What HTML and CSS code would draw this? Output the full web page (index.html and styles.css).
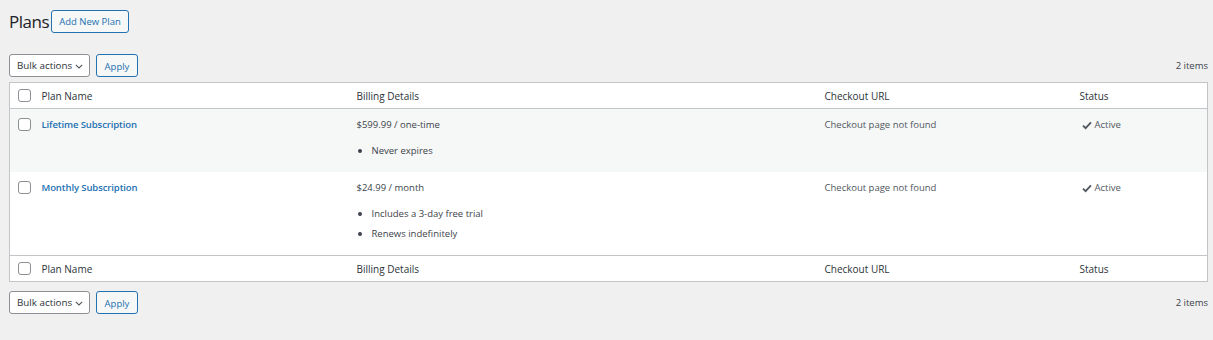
FILE: index.html
```html
<!DOCTYPE html>
<html lang="en">
<head>
<meta charset="utf-8">
<title>Plans</title>
<link rel="stylesheet" href="styles.css">
</head>
<body>
<div class="wrap">
  <div class="page-head">
    <h1 class="page-title">Plans</h1>
    <a class="btn btn-outline add-new" href="#">Add New Plan</a>
  </div>

  <div class="tablenav top">
    <div class="actions">
      <div class="select">Bulk actions
        <svg class="chev" width="8" height="5" viewBox="0 0 8 5"><path d="M0.8 0.8l3.2 3.2L7.2 0.8" fill="none" stroke="#50575e" stroke-width="1.1"/></svg>
      </div>
      <button class="btn btn-outline apply">Apply</button>
    </div>
    <div class="count">2 items</div>
  </div>

  <table class="list">
    <colgroup>
      <col class="c-check"><col class="c-name"><col class="c-bill"><col class="c-url"><col>
    </colgroup>
    <thead>
      <tr>
        <th class="check"><span class="cb"></span></th>
        <th>Plan Name</th>
        <th>Billing Details</th>
        <th>Checkout URL</th>
        <th>Status</th>
      </tr>
    </thead>
    <tbody>
      <tr class="alt">
        <td class="check"><span class="cb"></span></td>
        <td><a class="title" href="#">Lifetime Subscription</a></td>
        <td>
          <div class="price">$599.99 / one-time</div>
          <ul class="feat"><li>Never expires</li></ul>
        </td>
        <td>Checkout page not found</td>
        <td><span class="status"><svg width="10" height="9" viewBox="0 0 10 9"><path d="M1 4.6l2.6 2.6L9 1.3" fill="none" stroke="#50575e" stroke-width="1.8"/></svg>Active</span></td>
      </tr>
      <tr>
        <td class="check"><span class="cb"></span></td>
        <td><a class="title" href="#">Monthly Subscription</a></td>
        <td>
          <div class="price">$24.99 / month</div>
          <ul class="feat"><li>Includes a 3-day free trial</li><li>Renews indefinitely</li></ul>
        </td>
        <td>Checkout page not found</td>
        <td><span class="status"><svg width="10" height="9" viewBox="0 0 10 9"><path d="M1 4.6l2.6 2.6L9 1.3" fill="none" stroke="#50575e" stroke-width="1.8"/></svg>Active</span></td>
      </tr>
    </tbody>
    <tfoot>
      <tr>
        <th class="check"><span class="cb"></span></th>
        <th>Plan Name</th>
        <th>Billing Details</th>
        <th>Checkout URL</th>
        <th>Status</th>
      </tr>
    </tfoot>
  </table>

  <div class="tablenav bottom">
    <div class="actions">
      <div class="select">Bulk actions
        <svg class="chev" width="8" height="5" viewBox="0 0 8 5"><path d="M0.8 0.8l3.2 3.2L7.2 0.8" fill="none" stroke="#50575e" stroke-width="1.1"/></svg>
      </div>
      <button class="btn btn-outline apply">Apply</button>
    </div>
    <div class="count">2 items</div>
  </div>
</div>
</body>
</html>
```
FILE: styles.css
```css
* { box-sizing: border-box; }
html, body { margin: 0; padding: 0; }
body {
  background: #f0f0f1;
  color: #3c434a;
  font-family: "Open Sans", "Noto Sans", Arial, sans-serif;
  font-size: 9.5px;
  line-height: 14px;
}
.wrap { padding: 10px 5px 0 9px; }

.page-head { display: flex; align-items: center; height: 23px; }
.page-title {
  margin: 0 2px 0 0;
  font-size: 17px;
  letter-spacing: -0.5px;
  font-weight: 400;
  color: #1d2327;
  line-height: 23px;
}
.btn {
  display: inline-flex;
  align-items: center;
  justify-content: center;
  border: 1px solid #2271b1;
  border-radius: 3px;
  background: #f6f7f7;
  color: #2271b1;
  font-family: inherit;
  font-size: 9.5px;
  text-decoration: none;
  padding: 0;
}
.add-new { width: 78px; height: 23px; }

.tablenav {
  display: flex;
  justify-content: space-between;
  align-items: center;
  height: 23px;
}
.tablenav.top { margin-top: 21px; margin-bottom: 5px; }
.tablenav.bottom { margin-top: 9px; }
.actions { display: flex; align-items: center; gap: 6px; }
.select {
  width: 81px;
  height: 23px;
  border: 1px solid #8c8f94;
  border-radius: 3px;
  background: #fff;
  color: #2c3338;
  font-size: 9.8px;
  display: flex;
  align-items: center;
  padding: 0 0 0 7px;
  position: relative;
}
.select .chev { position: absolute; right: 6px; top: 9px; }
.apply { width: 42px; height: 23px; padding-top: 2px; }
.count { color: #3c434a; font-size: 9.5px; padding-right: 0; }

.list {
  width: 1199px;
  border-collapse: collapse;
  table-layout: fixed;
  background: #fff;
  border: 1px solid #c3c4c7;
}
.c-check { width: 24px; }
.c-name { width: 315px; }
.c-bill { width: 468px; }
.c-url { width: 255px; }

th {
  text-align: left;
  font-weight: 400;
  color: #2c3338;
  font-size: 10px;
  height: 26px;
  padding: 0 8px;
  vertical-align: middle;
}
thead tr { border-bottom: 1px solid #c3c4c7; }
tfoot tr { border-top: 1px solid #c3c4c7; }
th.check, td.check { padding: 0 0 0 8px; }
.cb {
  display: block;
  width: 13px;
  height: 13px;
  border: 1px solid #8c8f94;
  border-radius: 3px;
  background: #fff;
}
td {
  vertical-align: top;
  padding: 9px 8px 6px;
  color: #50575e;
}
td.check { padding-top: 9px; }
tr.alt td { background: #f6f7f7; }
.title {
  color: #2271b1;
  font-weight: 600;
  text-decoration: none;
  letter-spacing: -0.1px;
}
.price { color: #3c434a; }
.feat {
  margin: 11px 0 8px;
  padding: 0 0 0 15px;
  display: flex;
  flex-direction: column;
  gap: 5px;
  color: #3c434a;
}
.feat li { padding-left: 0; }
.feat li::marker { font-size: 10px; }
.status { display: inline-flex; align-items: center; gap: 3px; margin-left: 2px; }
```
